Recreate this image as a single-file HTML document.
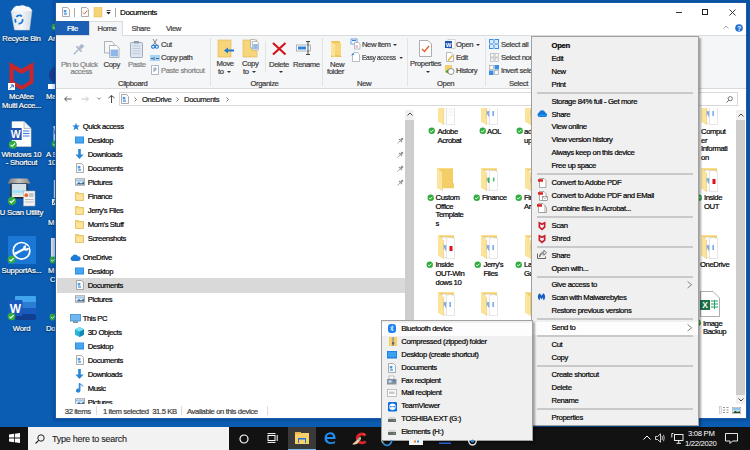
<!DOCTYPE html>
<html><head><meta charset="utf-8">
<style>
*{margin:0;padding:0;box-sizing:border-box}
html,body{width:750px;height:450px;overflow:hidden}
body{background:#0b5db3;font-family:"Liberation Sans",sans-serif;font-size:7.7px;letter-spacing:-0.4px;color:#000;position:relative}
.a{position:absolute}
svg.a{overflow:visible}
.t{position:absolute;white-space:nowrap;line-height:10px;-webkit-text-stroke:0.2px currentColor}
.g{color:#838383}
.d{color:#3c3c3c}
.w{color:#fff;letter-spacing:-0.2px;text-shadow:0 0 2px rgba(0,0,0,.6),0 1px 1px rgba(0,0,0,.5)}
.menu{position:absolute;background:#f0f0f0;border:1px solid #a0a0a0;box-shadow:2px 2px 2px rgba(0,0,0,.35)}
.mi{position:relative;height:12.9px;line-height:12.9px;white-space:nowrap}
.mi span{position:absolute;top:0;letter-spacing:-0.36px;-webkit-text-stroke:0.2px currentColor}
.ms{position:relative;height:4.07px}
.ms:after{content:"";position:absolute;left:5px;right:5px;top:0.3px;height:2px;background:#c9c9c9}
.hl{background:#fdfdfd}
.dd{display:inline-block;width:0;height:0;border-left:2px solid transparent;border-right:2px solid transparent;border-top:2.5px solid #333;vertical-align:1px;margin-left:1.5px}

</style></head><body>
<svg width="0" height="0" style="position:absolute"><defs><symbol id="fold" viewBox="0 0 18 24">
 <path d="M0 0 H16 V16 H17 V21 H0 Z" fill="#f3cd66"/>
 <path d="M0 0 H16 V1.2 H0 Z" fill="#f8dc88"/>
 <path d="M0 0 L5.5 5 V24 L0 20.5 Z" fill="#fbe49e"/>
 <path d="M5.5 5 V24" stroke="#eac25a" stroke-width="0.5"/>
</symbol>
<symbol id="foldp" viewBox="0 0 18 24">
 <path d="M0 0 H16 V21 H0 Z" fill="#f1cc68"/>
 <path d="M0 0 H16 V1.2 H0 Z" fill="#f8de8e"/>
 <path d="M4 2.5 Q7 1.5 11 3 V22.5 H4 Z" fill="#fbfbfb" stroke="#d4d4d4" stroke-width="0.5"/>
 <path d="M8.5 3 Q12 2 16.5 3.5 V23.5 H8.5 Z" fill="#fff" stroke="#cfcfcf" stroke-width="0.5"/>
 <path d="M5.5 9 Q7.8 11.5 5.5 15.5 Z" fill="#1d62d6"/><rect x="7" y="10" width="1.3" height="5.5" fill="#7fb0ee"/><rect x="11.5" y="10" width="1.3" height="5" fill="#5a98e6"/>
 <path d="M0 0 L5.5 5 V24 L0 20.5 Z" fill="#fbe39a"/>
 <path d="M5.5 5 V24" stroke="#eac25a" stroke-width="0.5"/>
</symbol><symbol id="foldg" viewBox="0 0 18 24">
 <path d="M0 0 H16 V21 H0 Z" fill="#f1cc68"/>
 <path d="M0 0 H16 V1.2 H0 Z" fill="#f8de8e"/>
 <path d="M4 2.5 Q7 1.5 11 3 V22.5 H4 Z" fill="#fbfbfb" stroke="#d4d4d4" stroke-width="0.5"/>
 <path d="M8.5 3 Q12 2 16.5 3.5 V23.5 H8.5 Z" fill="#fff" stroke="#cfcfcf" stroke-width="0.5"/>
 <path d="M5.5 9 Q7.8 11.5 5.5 15.5 Z" fill="#1f8a4a"/><rect x="7" y="10" width="1.5" height="5.5" fill="#2fae62"/><rect x="12" y="10" width="1.5" height="4" fill="#3cbf70"/>
 <path d="M0 0 L5.5 5 V24 L0 20.5 Z" fill="#fbe39a"/>
 <path d="M5.5 5 V24" stroke="#eac25a" stroke-width="0.5"/>
</symbol><symbol id="foldr" viewBox="0 0 18 24">
 <path d="M0 0 H16 V21 H0 Z" fill="#f1cc68"/>
 <path d="M0 0 H16 V1.2 H0 Z" fill="#f8de8e"/>
 <path d="M4 2.5 Q7 1.5 11 3 V22.5 H4 Z" fill="#fbfbfb" stroke="#d4d4d4" stroke-width="0.5"/>
 <path d="M8.5 3 Q12 2 16.5 3.5 V23.5 H8.5 Z" fill="#fff" stroke="#cfcfcf" stroke-width="0.5"/>
 <path d="M5.5 9 Q7.8 11.5 5.5 15.5 Z" fill="#1d62d6"/><rect x="7" y="10" width="1.3" height="5.5" fill="#7fb0ee"/><rect x="11.5" y="11" width="3" height="5" fill="#e0121c"/>
 <path d="M0 0 L5.5 5 V24 L0 20.5 Z" fill="#fbe39a"/>
 <path d="M5.5 5 V24" stroke="#eac25a" stroke-width="0.5"/>
</symbol><symbol id="foldw" viewBox="0 0 18 24">
 <path d="M0 0 H16 V21 H0 Z" fill="#f1cc68"/>
 <path d="M0 0 H16 V1.2 H0 Z" fill="#f8de8e"/>
 <path d="M4 2.5 Q7 1.5 11 3 V22.5 H4 Z" fill="#fbfbfb" stroke="#d4d4d4" stroke-width="0.5"/>
 <path d="M8.5 3 Q12 2 16.5 3.5 V23.5 H8.5 Z" fill="#fff" stroke="#cfcfcf" stroke-width="0.5"/>
 <path d="M9.5 5 H15.5 M9.5 8 H15.5 M9.5 11 H15.5 M9.5 14 H15.5" stroke="#e4e4e4" stroke-width="0.6"/>
 <path d="M0 0 L5.5 5 V24 L0 20.5 Z" fill="#fbe39a"/>
 <path d="M5.5 5 V24" stroke="#eac25a" stroke-width="0.5"/>
</symbol>
<symbol id="chk" viewBox="0 0 8 8">
 <circle cx="4" cy="4" r="3.4" fill="#2fac3e"/>
 <path d="M2.2 4.1 L3.5 5.3 L5.9 2.8" stroke="#fff" stroke-width="1" fill="none"/>
</symbol>
<symbol id="pin" viewBox="0 0 12 12">
 <path d="M0.8 11.2 L5.5 6.5" stroke="#858c94" stroke-width="1.3"/><path d="M11.3 3.3 L8.3 6.3 L5.7 3.7 L8.7 0.7 Z" fill="#858c94"/><path d="M8.6 8.6 L3.4 3.4" stroke="#858c94" stroke-width="1.8"/><path d="M6.5 6.5 L8 5 L7 4 L5.5 5.5 Z" fill="#858c94"/>
</symbol>
<symbol id="ndoc" viewBox="0 0 8 10">
 <path d="M0.5 0.5 H5.5 L7.5 2.5 V9.5 H0.5 Z" fill="#fafafa" stroke="#8a8a8a" stroke-width="0.7"/>
 <rect x="1.8" y="3" width="2.5" height="2.5" fill="#4a9be0"/>
 <rect x="2" y="6.2" width="3" height="1.6" fill="#62a8e8"/>
</symbol>
<symbol id="ndesk" viewBox="0 0 9 8">
 <rect x="0" y="0.5" width="9" height="7" fill="#2a8ce0"/>
 <rect x="0.8" y="1.2" width="7.4" height="5.2" fill="#46a6f0"/>
</symbol>
<symbol id="ndown" viewBox="0 0 9 10">
 <path d="M3.2 0 H5.8 V5.5 H8.6 L4.5 10 L0.4 5.5 H3.2 Z" fill="#2a87d8"/>
</symbol>
<symbol id="npic" viewBox="0 0 10 8">
 <rect x="0.3" y="0.8" width="9.4" height="6.4" fill="#f2f2f2" stroke="#7b7b7b" stroke-width="0.6"/>
 <path d="M1 6.5 L4 4 L6 5.5 L9 3.5 V6.5 Z" fill="#3c6e9c"/>
 <rect x="1" y="1.5" width="8" height="2" fill="#9cc8ec"/>
</symbol>
<symbol id="nfold" viewBox="0 0 9 9">
 <path d="M0.5 0.5 H3.5 L4.5 1.5 H8.5 V8.5 H0.5 Z" fill="#f4d06a" stroke="#dcae48" stroke-width="0.6"/>
 <rect x="1.2" y="2.4" width="6.6" height="5.5" fill="#fde49a"/>
</symbol>
<symbol id="ncloud" viewBox="0 0 11 7">
 <path d="M2.5 7 A2.5 2.5 0 0 1 2.2 2.2 A3.2 3.2 0 0 1 8 2.4 A2.3 2.3 0 0 1 8.7 7 Z" fill="#1c7ad4"/>
</symbol>
<symbol id="npc" viewBox="0 0 11 9">
 <rect x="0.5" y="0.5" width="10" height="6.5" fill="#6fb7f0" stroke="#3b8ed4" stroke-width="0.8"/>
 <rect x="3" y="7.5" width="5" height="1.2" fill="#5a6670"/>
</symbol>
<symbol id="n3d" viewBox="0 0 9 10">
 <path d="M4.5 0 L9 2.3 V7.7 L4.5 10 L0 7.7 V2.3 Z" fill="#2bb4d8"/>
 <path d="M4.5 4.6 L9 2.3 V7.7 L4.5 10 Z" fill="#138ab6"/>
 <path d="M0 2.3 L4.5 0 L9 2.3 L4.5 4.6 Z" fill="#7fe0f4"/>
</symbol>
<symbol id="nmusic" viewBox="0 0 8 10">
 <path d="M4 0.5 V7.5 A1.9 1.6 0 1 1 3.2 6.3 V0.5 H4 Q5.5 2.5 7.2 3.2" stroke="#2a87d8" stroke-width="0.9" fill="#2a87d8"/>
</symbol>
<symbol id="star" viewBox="0 0 10 10">
 <path d="M5 0.3 L6.3 3.6 L9.8 3.8 L7.1 6 L8 9.6 L5 7.6 L2 9.6 L2.9 6 L0.2 3.8 L3.7 3.6 Z" fill="#2a87d8"/>
</symbol>
</defs></svg>
<svg class="a" style="left:10px;top:4px;" width="23" height="27" viewBox="0 0 23 27"><defs><linearGradient id="rb" x1="0" x2="1"><stop offset="0" stop-color="#dfe6ec"/><stop offset="0.5" stop-color="#f4f6f8"/><stop offset="1" stop-color="#d2dae2"/></linearGradient></defs><path d="M1 7 L22 6 L19.5 26 L4.5 26 Z" fill="url(#rb)" stroke="#c9d2da" stroke-width="0.5"/><path d="M1.5 7.5 Q4 1 9 2 Q13 0.5 16 2.5 Q20.5 2 22 7 Z" fill="#f6f8fa"/><path d="M6.5 13 A3.5 3.5 0 0 1 12 12.5" stroke="#1a78d8" stroke-width="1.8" fill="none"/><path d="M12.5 15 A3.5 3.5 0 0 1 8.5 19.5" stroke="#1a78d8" stroke-width="1.8" fill="none"/><path d="M6 18.5 A3.5 3.5 0 0 1 5.5 15" stroke="#1a78d8" stroke-width="1.8" fill="none"/></svg>
<div class="t w" style="left:-18.5px;width:80px;text-align:center;top:34.00px;">Recycle Bin</div>
<svg class="a" style="left:9px;top:62px;" width="25" height="28" viewBox="0 0 25 28"><path d="M0.5 0 L12.5 7 L24.5 0 V21 L12.5 28 L0.5 21 Z" fill="#c9252c"/><path d="M4.5 7.5 L12.5 12 L20.5 7.5 V19 L12.5 23.8 L4.5 19 Z" fill="#0b5db3"/><rect x="-1" y="21" width="7" height="7" fill="#fff"/><path d="M0.8 26.5 L4 23.3 M2 23 H4.3 V25.3" stroke="#1f5fb8" stroke-width="1" fill="none"/></svg>
<div class="t w" style="left:-18.5px;width:80px;text-align:center;top:92.00px;">McAfee</div>
<div class="t w" style="left:-18.5px;width:80px;text-align:center;top:100.50px;">Multi Acce...</div>
<svg class="a" style="left:9px;top:121px;" width="23" height="27" viewBox="0 0 23 27"><path d="M3 0.5 H15 L22 7.5 V25.5 H3 Z" fill="#fff" stroke="#d8d0c8" stroke-width="0.6"/><path d="M15 0.5 V7.5 H22" fill="#f0f0f0" stroke="#9a9a9a" stroke-width="0.6"/><rect x="0.2" y="7" width="12.5" height="12" fill="#2456b8"/><text x="6.5" y="16.8" font-size="10.5" font-weight="bold" fill="#fff" text-anchor="middle" font-family="Liberation Sans" style="letter-spacing:-0.5px">W</text><path d="M14 10 H20.5 M14 12.5 H20.5 M14 15 H20.5" stroke="#3f7ad8" stroke-width="1.1"/></svg>
<svg class="a" style="left:7.5px;top:139.5px;" width="9.5" height="9.5"><use href="#chk"/></svg>
<div class="t w" style="left:-18.5px;width:80px;text-align:center;top:149.50px;">Windows 10</div>
<div class="t w" style="left:-18.5px;width:80px;text-align:center;top:158.00px;">- Shortcut</div>
<svg class="a" style="left:8px;top:178px;" width="28" height="29" viewBox="0 0 28 29"><defs><linearGradient id="lid" x1="0" x2="1"><stop offset="0" stop-color="#7a7672"/><stop offset="0.5" stop-color="#c8c4c0"/><stop offset="1" stop-color="#8a8682"/></linearGradient></defs><path d="M2.5 0.5 H19.5 L22.5 5.5 H-0.5 Z" fill="url(#lid)"/><rect x="2.5" y="5.5" width="17" height="15" fill="#222"/><rect x="3.8" y="6" width="14.5" height="13" fill="#d4e2ea"/><rect x="3.8" y="12.5" width="14.5" height="2.2" fill="#8fe4fa"/><rect x="3.8" y="17.5" width="14.5" height="1.5" fill="#f0f0f0"/><rect x="15.5" y="13" width="11.5" height="15" fill="#f2f2f2" stroke="#a8a8a8" stroke-width="0.5"/><circle cx="18.3" cy="17.2" r="1.9" fill="#e2702a"/><rect x="21" y="15" width="4.5" height="4" fill="#c4c4c4"/><path d="M17 21.5 H25.5 M17 24 H25.5" stroke="#bdbdbd" stroke-width="1.2"/></svg>
<svg class="a" style="left:7px;top:195.5px;" width="10" height="10"><use href="#chk"/></svg>
<div class="t w" style="left:-18.5px;width:80px;text-align:center;top:207.50px;">U Scan Utility</div>
<div class="a" style="left:7.5px;top:235.5px;width:28.5px;height:28px;background:#1a78d4"></div>
<svg class="a" style="left:11px;top:240px;" width="21" height="21" viewBox="0 0 21 21"><circle cx="10.5" cy="10.8" r="8.3" fill="none" stroke="#fff" stroke-width="1.7"/><path d="M4.5 13.5 L14 8.5" stroke="#fff" stroke-width="2"/><circle cx="15" cy="8" r="2.8" fill="#fff"/><path d="M15.5 5 L14.5 8.5 L18.5 7.5 Z" fill="#1a78d4"/><circle cx="4.8" cy="13.3" r="1.4" fill="#fff"/></svg>
<svg class="a" style="left:7px;top:254.5px;" width="9" height="9"><use href="#chk"/></svg>
<div class="t w" style="left:-18.5px;width:80px;text-align:center;top:265.50px;">SupportAs...</div>
<svg class="a" style="left:8px;top:296px;" width="28" height="24" viewBox="0 0 28 24"><rect x="7" y="0" width="21" height="24" rx="1" fill="#41a5ee"/><rect x="7" y="6" width="21" height="6" fill="#2b7cd3"/><rect x="7" y="12" width="21" height="6" fill="#185abd"/><rect x="7" y="18" width="21" height="6" rx="1" fill="#103f91"/><rect x="0" y="4" width="14.5" height="16" rx="1" fill="#185abd"/><text x="7.2" y="16.5" font-size="12" font-weight="bold" fill="#fff" text-anchor="middle" font-family="Liberation Sans">W</text></svg>
<svg class="a" style="left:7px;top:311.5px;" width="9" height="9"><use href="#chk"/></svg>
<div class="t w" style="left:-18.5px;width:80px;text-align:center;top:323.50px;">Word</div>
<svg class="a" style="left:51px;top:23px;" width="8" height="8"><use href="#chk"/></svg>
<div class="t w" style="left:48px;top:34.00px;">Ar</div>
<svg class="a" style="left:48px;top:63px;" width="10" height="25" viewBox="0 0 10 25"><circle cx="10" cy="12" r="9" fill="#1b3a8c"/><rect x="0" y="21" width="7" height="5" fill="#fff"/></svg>
<div class="t w" style="left:46px;top:92.00px;">Ma</div>
<svg class="a" style="left:52px;top:126px;" width="5" height="16" viewBox="0 0 5 16"><path d="M1.5 0 H5 V16 H1.5 Z" fill="#f2f2f2"/><path d="M1.5 2 L3 8 L4.5 2" stroke="#2b5fc0" stroke-width="0.8" fill="none"/></svg>
<svg class="a" style="left:51px;top:140px;" width="8" height="8"><use href="#chk"/></svg>
<div class="t w" style="left:46px;top:149.50px;">A S</div>
<div class="t w" style="left:48px;top:158.00px;">10</div>
<svg class="a" style="left:52px;top:180px;" width="5" height="26" viewBox="0 0 5 26"><path d="M1.8 0 H5 V18 H1.8 Z" fill="#e8e8e8"/><rect x="0" y="19" width="5" height="6" fill="#fff"/><path d="M1 24 L3.5 21 M2 21 H3.7 V22.7" stroke="#111" stroke-width="0.8" fill="none"/></svg>
<div class="t w" style="left:48px;top:217.50px;">M</div>
<svg class="a" style="left:50px;top:238px;" width="8" height="24" viewBox="0 0 8 24"><rect x="1" y="0" width="8" height="22" fill="#dfe3e6"/></svg>
<svg class="a" style="left:49px;top:256px;" width="8" height="8"><use href="#chk"/></svg>
<div class="t w" style="left:48px;top:265.50px;">M</div>
<div class="t w" style="left:50px;top:274.50px;">C</div>
<svg class="a" style="left:49px;top:313px;" width="8" height="8"><use href="#chk"/></svg>
<div class="t w" style="left:46px;top:323.50px;">Do</div>
<div class="a" style="left:53px;top:0px;width:696px;height:421px;background:rgba(0,30,80,.25);filter:blur(1.5px)"></div>
<div class="a" style="left:55px;top:2px;width:692px;height:417px;background:#fff;border:1px solid #1a5cae"></div>
<svg class="a" style="left:62px;top:7px;" width="8" height="10"><use href="#ndoc"/></svg>
<div class="a" style="left:74px;top:8px;width:1px;height:9px;background:#a8a8a8"></div>
<svg class="a" style="left:81px;top:7px;" width="8" height="10" viewBox="0 0 8 10"><path d="M0.5 0.5 H5.5 L7.5 2.5 V9.5 H0.5 Z" fill="#fafafa" stroke="#8a8a8a" stroke-width="0.7"/><path d="M2 5.5 L3.5 7 L6.3 3.5" stroke="#e06a2a" stroke-width="1" fill="none"/></svg>
<svg class="a" style="left:94px;top:7px;" width="8" height="10" viewBox="0 0 8 10"><rect x="0" y="0.5" width="8" height="9.5" fill="#f6d477" stroke="#e0b44c" stroke-width="0.5"/></svg>
<svg class="a" style="left:106px;top:10px;" width="5" height="5" viewBox="0 0 5 5"><rect x="0.5" y="0" width="4" height="0.8" fill="#222"/><path d="M0.3 2 H4.7 L2.5 4.5 Z" fill="#222"/></svg>
<div class="a" style="left:115px;top:8px;width:1px;height:9px;background:#a8a8a8"></div>
<div class="t " style="left:120px;top:7.50px;font-size:8px">Documents</div>
<div class="a" style="left:676px;top:12px;width:6px;height:1px;background:#333"></div>
<div class="a" style="left:702px;top:9px;width:6px;height:6px;border:1px solid #222"></div>
<svg class="a" style="left:728.5px;top:8.5px;" width="7" height="7" viewBox="0 0 7 7"><path d="M0.5 0.5 L6.5 6.5 M6.5 0.5 L0.5 6.5" stroke="#222" stroke-width="0.9"/></svg>
<div class="a" style="left:56px;top:21px;width:33px;height:14px;background:#1a5fb4"></div>
<div class="t " style="left:67px;top:24.00px;color:#fff">File</div>
<div class="a" style="left:89px;top:21px;width:34px;height:15px;background:#f5f6f7;border:1px solid #dadbdc;border-bottom:none;z-index:2"></div>
<div class="t d" style="left:97.5px;top:24.00px;z-index:3">Home</div>
<div class="t d" style="left:131.5px;top:24.00px;">Share</div>
<div class="t d" style="left:166px;top:24.00px;">View</div>
<svg class="a" style="left:723px;top:25px;" width="6" height="4" viewBox="0 0 6 4"><path d="M0.5 3.5 L3 1 L5.5 3.5" stroke="#9a9a9a" stroke-width="0.9" fill="none"/></svg>
<svg class="a" style="left:735px;top:24px;" width="8" height="8" viewBox="0 0 8 8"><circle cx="4" cy="4" r="3.8" fill="#1f6fd0"/><text x="4" y="6.6" font-size="7" font-weight="bold" fill="#fff" text-anchor="middle" font-family="Liberation Sans">?</text></svg>
<div class="a" style="left:56px;top:35px;width:690px;height:54px;background:#f5f6f7;border-top:1px solid #dadbdc;border-bottom:1px solid #dadbdc"></div>
<div class="a" style="left:210px;top:38px;width:1px;height:48px;background:#e2e3e4"></div>
<div class="a" style="left:322px;top:38px;width:1px;height:48px;background:#e2e3e4"></div>
<div class="a" style="left:406.5px;top:38px;width:1px;height:48px;background:#e2e3e4"></div>
<div class="a" style="left:484.5px;top:38px;width:1px;height:48px;background:#e2e3e4"></div>
<div class="a" style="left:264.5px;top:41px;width:1px;height:31px;background:#e2e3e4"></div>
<svg class="a" style="left:73px;top:42.5px;" width="12" height="12" viewBox="0 0 12 12"><path d="M0.8 11.2 L5.5 6.5" stroke="#a9b6c9" stroke-width="1.3"/><path d="M11.3 3.3 L8.3 6.3 L5.7 3.7 L8.7 0.7 Z" fill="#a9b6c9"/><path d="M8.6 8.6 L3.4 3.4" stroke="#a9b6c9" stroke-width="1.8"/><path d="M6.5 6.5 L8 5 L7 4 L5.5 5.5 Z" fill="#a9b6c9"/></svg>
<div class="t g" style="left:61px;top:59.50px;">Pin to Quick</div>
<div class="t g" style="left:70.5px;top:67.00px;">access</div>
<svg class="a" style="left:103.5px;top:40.5px;" width="16" height="17" viewBox="0 0 16 17"><path d="M0.5 0.5 H8 L10 2.5 V12 H0.5 Z" fill="#f4f6f8" stroke="#8c96a0" stroke-width="0.7"/><path d="M5.5 4.5 H12.5 L15 7 V16.5 H5.5 Z" fill="#fff" stroke="#8c96a0" stroke-width="0.7"/><rect x="6.5" y="8.5" width="7.5" height="7" fill="#8fb8ea"/></svg>
<div class="t d" style="left:103.5px;top:59.50px;">Copy</div>
<svg class="a" style="left:129.5px;top:40.5px;" width="13" height="17" viewBox="0 0 13 17"><rect x="0.5" y="1.5" width="12" height="15" rx="1" fill="#dfe6f0" stroke="#8c9cb2" stroke-width="0.8"/><rect x="4" y="0" width="5" height="2.5" fill="#8c9cb2"/><path d="M2.5 5 H10.5 M2.5 7.5 H10.5 M2.5 10 H10.5 M2.5 12.5 H10.5" stroke="#b4c4da" stroke-width="0.8"/></svg>
<div class="t g" style="left:128px;top:59.50px;">Paste</div>
<svg class="a" style="left:150.5px;top:39px;" width="8" height="10" viewBox="0 0 8 10"><path d="M2 0 L5.5 6 M6 0 L2.5 6" stroke="#6a6a6a" stroke-width="0.8"/><circle cx="2.2" cy="7.7" r="1.6" fill="none" stroke="#1f78d1" stroke-width="1.1"/><circle cx="5.8" cy="7.7" r="1.6" fill="none" stroke="#1f78d1" stroke-width="1.1"/></svg>
<div class="t d" style="left:161px;top:39.50px;">Cut</div>
<svg class="a" style="left:150px;top:54.5px;" width="10" height="6" viewBox="0 0 10 6"><rect x="0" y="0" width="10" height="6" fill="#a8d4f4"/><path d="M1 3.5 H3 M4 2 V5 M6 3.5 H9" stroke="#2a4a7a" stroke-width="0.8"/></svg>
<div class="t d" style="left:161px;top:52.50px;">Copy path</div>
<svg class="a" style="left:151px;top:65px;" width="8" height="10" viewBox="0 0 8 10"><path d="M0.5 0.5 H7.5 V9.5 H0.5 Z" fill="#fff" stroke="#8c9cb2" stroke-width="0.7"/><path d="M3 7 V3 H5 V5 H3" stroke="#7a8aa2" stroke-width="0.8" fill="none"/></svg>
<div class="t g" style="left:161px;top:65.50px;">Paste shortcut</div>
<div class="t d" style="left:118px;top:78.80px;">Clipboard</div>
<svg class="a" style="left:218px;top:40px;" width="17" height="17" viewBox="0 0 17 17"><rect x="0" y="0" width="13" height="17" fill="#f7d57a" stroke="#e2b54e" stroke-width="0.6"/><path d="M6 10.5 L10 7.5 V9.5 H16 V11.5 H10 V13.5 Z" fill="#1f78d1"/></svg>
<div class="t d" style="left:216.5px;top:59.30px;">Move</div>
<div class="t d" style="left:218px;top:67.00px;">to <i class="dd"></i></div>
<svg class="a" style="left:242.5px;top:39px;" width="16" height="18" viewBox="0 0 16 18"><rect x="0" y="1" width="14" height="17" fill="#f7d57a" stroke="#e2b54e" stroke-width="0.6"/><path d="M7.5 0.5 H12 L13.5 2 V9 H7.5 Z" fill="#f4f6f8" stroke="#8c96a0" stroke-width="0.6"/><path d="M9.5 2.5 H14 L15.5 4 V11 H9.5 Z" fill="#fff" stroke="#8c96a0" stroke-width="0.6"/><rect x="10.3" y="5" width="4.5" height="5" fill="#8fb8ea"/></svg>
<div class="t d" style="left:242px;top:59.30px;">Copy</div>
<div class="t d" style="left:243px;top:67.00px;">to <i class="dd"></i></div>
<svg class="a" style="left:271.5px;top:41.5px;" width="14.5" height="13.5" viewBox="0 0 14.5 13.5"><path d="M1 1 L13.5 12.5 M13.5 1 L1 12.5" stroke="#d4151c" stroke-width="2.2"/></svg>
<div class="t d" style="left:269px;top:59.50px;">Delete</div>
<div class="t d" style="left:277px;top:67.00px;"><i class="dd"></i></div>
<svg class="a" style="left:295.5px;top:41px;" width="18" height="14" viewBox="0 0 18 14"><rect x="0.5" y="4" width="14" height="6" fill="#fff" stroke="#8c96a0" stroke-width="0.7"/><rect x="2" y="5.5" width="8" height="3" fill="#2a86d8"/><path d="M10 0.5 H14 M12 0.5 V13.5 M10 13.5 H14" stroke="#333" stroke-width="0.9"/></svg>
<div class="t d" style="left:293px;top:59.50px;">Rename</div>
<div class="t d" style="left:250.5px;top:78.80px;">Organize</div>
<svg class="a" style="left:330.5px;top:41px;" width="11" height="16" viewBox="0 0 11 16"><path d="M0 0 H9 V14 L11 16 H0 Z" fill="#efc55a"/><path d="M0 1 L4 3 V16 L0 14 Z" fill="#fbe39a"/><rect x="4" y="2" width="6" height="12" fill="#f7d67a"/></svg>
<div class="t d" style="left:330px;top:59.50px;">New</div>
<div class="t d" style="left:327px;top:67.00px;">folder</div>
<svg class="a" style="left:351px;top:39px;" width="9" height="10" viewBox="0 0 9 10"><rect x="0" y="0" width="6" height="5" fill="#fff" stroke="#3b7fd0" stroke-width="0.7"/><path d="M1 1.5 H5" stroke="#3b7fd0" stroke-width="1.2"/><path d="M3.5 3.5 H7.5 L9 5 V10 H3.5 Z" fill="#fff" stroke="#8c96a0" stroke-width="0.6"/><rect x="4.5" y="6" width="2.5" height="3" fill="#f0c0c8"/></svg>
<div class="t d" style="left:362px;top:39.50px;letter-spacing:-0.45px">New item<i class="dd" style="margin-left:3px"></i></div>
<svg class="a" style="left:351px;top:52px;" width="9" height="10" viewBox="0 0 9 10"><path d="M3 0.5 H6.5 L8.5 2.5 V9.5 H1.5 V3 Z" fill="#fff" stroke="#8c96a0" stroke-width="0.6"/><path d="M0 3.5 L2 1 L3.5 2.5 Z" fill="#2a86d8"/></svg>
<div class="t d" style="left:362px;top:52.50px;transform:scaleX(0.87);transform-origin:0 0">Easy access<i class="dd" style="margin-left:4px"></i></div>
<div class="t d" style="left:357px;top:79.00px;">New</div>
<svg class="a" style="left:419px;top:40px;" width="13" height="17" viewBox="0 0 13 17"><path d="M0.5 0.5 H9 L12.5 4 V16.5 H0.5 Z" fill="#fff" stroke="#8c8c8c" stroke-width="0.7"/><path d="M3 9 L5.5 11.5 L10 6" stroke="#e85c20" stroke-width="1.3" fill="none"/></svg>
<div class="t d" style="left:410px;top:59.10px;">Properties</div>
<div class="t d" style="left:424px;top:66.50px;"><i class="dd"></i></div>
<svg class="a" style="left:445px;top:39px;" width="10" height="10" viewBox="0 0 10 10"><rect x="3" y="0.5" width="7" height="9" fill="#fff" stroke="#b0b0b0" stroke-width="0.5"/><rect x="0" y="2" width="7" height="7" fill="#1c55b8"/><text x="3.5" y="7.7" font-size="6" font-weight="bold" fill="#fff" text-anchor="middle" font-family="Liberation Sans">W</text></svg>
<div class="t d" style="left:456px;top:39.50px;">Open <i class="dd"></i></div>
<svg class="a" style="left:446px;top:52px;" width="8" height="10" viewBox="0 0 8 10"><path d="M0.5 0.5 H5 L7.5 3 V9.5 H0.5 Z" fill="#fff" stroke="#8c8c8c" stroke-width="0.6"/><path d="M2 8.5 L6.5 3.5" stroke="#e8a820" stroke-width="1.2"/></svg>
<div class="t d" style="left:456px;top:52.50px;">Edit</div>
<svg class="a" style="left:445px;top:65px;" width="10" height="10" viewBox="0 0 10 10"><rect x="0" y="0" width="7" height="8" fill="#f6d06a"/><circle cx="6" cy="6.5" r="3" fill="#fff" stroke="#666" stroke-width="0.7"/><path d="M0.5 6.5 L3 4.5 V8.5 Z" fill="#2ea44a"/></svg>
<div class="t d" style="left:456px;top:65.50px;">History</div>
<div class="t d" style="left:437px;top:78.90px;">Open</div>
<svg class="a" style="left:489px;top:39px;" width="10" height="10" viewBox="0 0 10 10"><rect x="0" y="0" width="10" height="10" fill="#3b8ee0"/><path d="M5 0 V10 M0 5 H10" stroke="#fff" stroke-width="0.8"/><rect x="1" y="1" width="3" height="3" fill="#d8ecff"/><rect x="6" y="1" width="3" height="3" fill="#d8ecff"/><rect x="1" y="6" width="3" height="3" fill="#d8ecff"/><rect x="6" y="6" width="3" height="3" fill="#d8ecff"/></svg>
<div class="t d" style="left:501px;top:39.50px;">Select all</div>
<svg class="a" style="left:490px;top:52.5px;" width="9" height="9" viewBox="0 0 9 9"><rect x="0.5" y="0.5" width="3.5" height="3.5" fill="none" stroke="#aaa" stroke-width="0.6"/><rect x="5" y="0.5" width="3.5" height="3.5" fill="none" stroke="#aaa" stroke-width="0.6"/><rect x="0.5" y="5" width="3.5" height="3.5" fill="none" stroke="#aaa" stroke-width="0.6"/><rect x="5" y="5" width="3.5" height="3.5" fill="none" stroke="#aaa" stroke-width="0.6"/></svg>
<div class="t d" style="left:501px;top:52.50px;">Select none</div>
<svg class="a" style="left:489px;top:65px;" width="10" height="10" viewBox="0 0 10 10"><rect x="0.5" y="0.5" width="4" height="4" fill="none" stroke="#999" stroke-width="0.6"/><rect x="5.5" y="0" width="4.5" height="4.5" fill="#3b8ee0"/><rect x="0" y="5.5" width="4.5" height="4.5" fill="#3b8ee0"/><rect x="5.5" y="5.5" width="4" height="4" fill="none" stroke="#999" stroke-width="0.6"/></svg>
<div class="t d" style="left:501px;top:65.50px;">Invert selection</div>
<div class="t d" style="left:509px;top:78.70px;">Select</div>
<svg class="a" style="left:64px;top:96px;" width="8" height="6" viewBox="0 0 8 6"><path d="M3 0.5 L0.7 3 L3 5.5 M0.7 3 H7.5" stroke="#5a5a5a" stroke-width="1" fill="none"/></svg>
<svg class="a" style="left:81px;top:96px;" width="8" height="6" viewBox="0 0 8 6"><path d="M5 0.5 L7.3 3 L5 5.5 M7.3 3 H0.5" stroke="#c8c8c8" stroke-width="1" fill="none"/></svg>
<svg class="a" style="left:97px;top:97px;" width="4" height="3" viewBox="0 0 4 3"><path d="M0.3 0.5 L2 2.3 L3.7 0.5" stroke="#666" stroke-width="0.8" fill="none"/></svg>
<svg class="a" style="left:107.5px;top:95px;" width="7" height="8" viewBox="0 0 7 8"><path d="M0.5 3 L3.5 0.5 L6.5 3 M3.5 0.5 V8" stroke="#4a4a4a" stroke-width="1" fill="none"/></svg>
<div class="a" style="left:118.5px;top:92px;width:480px;height:14px;border:1px solid #d9d9d9;background:#fff"></div>
<svg class="a" style="left:121px;top:94px;" width="8" height="10"><use href="#ndoc"/></svg>
<svg class="a" style="left:133.5px;top:97px;" width="3" height="5" viewBox="0 0 3 5"><path d="M0.5 0.5 L2.5 2.5 L0.5 4.5" stroke="#555" stroke-width="0.8" fill="none"/></svg>
<div class="t " style="left:142px;top:94.50px;color:#1a1a1a">OneDrive</div>
<svg class="a" style="left:175.5px;top:97px;" width="3" height="5" viewBox="0 0 3 5"><path d="M0.5 0.5 L2.5 2.5 L0.5 4.5" stroke="#555" stroke-width="0.8" fill="none"/></svg>
<div class="t " style="left:184px;top:94.50px;color:#1a1a1a">Documents</div>
<svg class="a" style="left:226px;top:97px;" width="3" height="5" viewBox="0 0 3 5"><path d="M0.5 0.5 L2.5 2.5 L0.5 4.5" stroke="#555" stroke-width="0.8" fill="none"/></svg>
<div class="a" style="left:602px;top:92px;width:135.5px;height:14px;border:1px solid #d9d9d9;background:#fff"></div>
<svg class="a" style="left:726px;top:96px;" width="7" height="7" viewBox="0 0 7 7"><circle cx="4.3" cy="2.7" r="2.1" fill="none" stroke="#555" stroke-width="0.8"/><path d="M2.8 4.2 L0.5 6.5" stroke="#555" stroke-width="0.9"/></svg>
<div class="a" style="left:56.5px;top:278px;width:348px;height:14.5px;background:#d9d9d9"></div>
<svg class="a" style="left:72px;top:121.5px;" width="8" height="9"><use href="#star"/></svg>
<div class="t " style="left:82.7px;top:121.50px;">Quick access</div>
<svg class="a" style="left:75.0px;top:136.0px;" width="9" height="8"><use href="#ndesk"/></svg>
<div class="t " style="left:87.7px;top:135.50px;">Desktop</div>
<svg class="a" style="left:396.5px;top:136.5px;" width="7" height="7"><use href="#pin"/></svg>
<svg class="a" style="left:75.0px;top:149.0px;" width="9" height="10"><use href="#ndown"/></svg>
<div class="t " style="left:87.7px;top:149.50px;">Downloads</div>
<svg class="a" style="left:396.5px;top:150.5px;" width="7" height="7"><use href="#pin"/></svg>
<svg class="a" style="left:75.5px;top:163.0px;" width="8" height="10"><use href="#ndoc"/></svg>
<div class="t " style="left:87.7px;top:163.50px;">Documents</div>
<svg class="a" style="left:396.5px;top:164.5px;" width="7" height="7"><use href="#pin"/></svg>
<svg class="a" style="left:74.5px;top:178.0px;" width="10" height="8"><use href="#npic"/></svg>
<div class="t " style="left:87.7px;top:177.50px;">Pictures</div>
<svg class="a" style="left:396.5px;top:178.5px;" width="7" height="7"><use href="#pin"/></svg>
<svg class="a" style="left:75.0px;top:191.5px;" width="9" height="9"><use href="#nfold"/></svg>
<div class="t " style="left:87.7px;top:191.50px;">Finance</div>
<svg class="a" style="left:75.0px;top:205.5px;" width="9" height="9"><use href="#nfold"/></svg>
<div class="t " style="left:87.7px;top:205.50px;">Jerry's Files</div>
<svg class="a" style="left:75.0px;top:219.5px;" width="9" height="9"><use href="#nfold"/></svg>
<div class="t " style="left:87.7px;top:219.50px;">Mom's Stuff</div>
<svg class="a" style="left:75.0px;top:233.5px;" width="9" height="9"><use href="#nfold"/></svg>
<div class="t " style="left:87.7px;top:233.50px;">Screenshots</div>
<svg class="a" style="left:70px;top:254px;" width="11" height="7"><use href="#ncloud"/></svg>
<div class="t " style="left:82.7px;top:252.80px;">OneDrive</div>
<svg class="a" style="left:75.0px;top:267.2px;" width="9" height="8"><use href="#ndesk"/></svg>
<div class="t " style="left:87.7px;top:266.70px;">Desktop</div>
<svg class="a" style="left:75.5px;top:280.3px;" width="8" height="10"><use href="#ndoc"/></svg>
<div class="t " style="left:87.7px;top:280.80px;">Documents</div>
<svg class="a" style="left:74.5px;top:295.2px;" width="10" height="8"><use href="#npic"/></svg>
<div class="t " style="left:87.7px;top:294.70px;">Pictures</div>
<svg class="a" style="left:70px;top:313.5px;" width="11" height="9"><use href="#npc"/></svg>
<div class="t " style="left:82.7px;top:313.50px;">This PC</div>
<svg class="a" style="left:75.0px;top:327.0px;" width="9" height="10"><use href="#n3d"/></svg>
<div class="t " style="left:87.7px;top:327.50px;">3D Objects</div>
<svg class="a" style="left:75.0px;top:342.0px;" width="9" height="8"><use href="#ndesk"/></svg>
<div class="t " style="left:87.7px;top:341.50px;">Desktop</div>
<svg class="a" style="left:75.5px;top:355.0px;" width="8" height="10"><use href="#ndoc"/></svg>
<div class="t " style="left:87.7px;top:355.50px;">Documents</div>
<svg class="a" style="left:75.0px;top:369.0px;" width="9" height="10"><use href="#ndown"/></svg>
<div class="t " style="left:87.7px;top:369.50px;">Downloads</div>
<svg class="a" style="left:75.5px;top:383.0px;" width="8" height="10"><use href="#nmusic"/></svg>
<div class="t " style="left:87.7px;top:383.50px;">Music</div>
<svg class="a" style="left:74.5px;top:398.0px;" width="10" height="8"><use href="#npic"/></svg>
<div class="t " style="left:87.7px;top:397.50px;">Pictures</div>
<div class="a" style="left:405px;top:110px;width:9px;height:295px;background:#f0f0f0"></div>
<div class="a" style="left:405px;top:120px;width:9px;height:280px;background:#cdcdcd"></div>
<svg class="a" style="left:406.5px;top:112px;" width="6" height="4" viewBox="0 0 6 4"><path d="M0.5 3.5 L3 1 L5.5 3.5" stroke="#333" stroke-width="0.9" fill="none"/></svg>
<div class="a" style="left:56px;top:404px;width:690px;height:14px;background:#fff"></div>
<div class="t d" style="left:64.8px;top:406.50px;">32 items</div>
<div class="a" style="left:95.5px;top:406px;width:1px;height:9px;background:#dcdcdc"></div>
<div class="t d" style="left:103px;top:406.50px;">1 item selected&nbsp; 31.5 KB</div>
<div class="a" style="left:180.5px;top:406px;width:1px;height:9px;background:#dcdcdc"></div>
<div class="t d" style="left:187px;top:406.50px;">Available on this device</div>
<div class="a" style="left:266.5px;top:406px;width:1px;height:9px;background:#dcdcdc"></div>
<svg class="a" style="left:719px;top:406px;" width="10" height="8" viewBox="0 0 10 8"><rect x="0.3" y="0.3" width="2" height="7.4" fill="#f4f4f4" stroke="#b0b0b0" stroke-width="0.5"/><path d="M4 1.5 H6 M7.5 1.5 H9.5 M4 4 H6 M7.5 4 H9.5 M4 6.5 H6 M7.5 6.5 H9.5" stroke="#7a7a7a" stroke-width="0.8"/></svg>
<svg class="a" style="left:732px;top:407px;" width="9" height="7" viewBox="0 0 9 7"><rect x="0.3" y="0.3" width="8.4" height="6.4" fill="#fff" stroke="#a89c8c" stroke-width="0.6"/><rect x="1" y="1" width="7" height="2.5" fill="#8ec4f0"/><path d="M1 5.8 L3 3.8 L5 4.8 L8 4.2 V6 H1 Z" fill="#1e4d2e"/></svg>
<div class="a" style="left:414px;top:108px;width:321px;height:300px;overflow:hidden"></div>
<div class="a" style="left:414px;top:108px;width:321px;height:296px;overflow:hidden">
<svg class="a" style="left:23.5px;top:-7px" width="18" height="24" viewBox="0 0 18 24" preserveAspectRatio="none"><use href="#foldw"/></svg>
<svg class="a" style="left:67px;top:-7px" width="18" height="24" viewBox="0 0 18 24" preserveAspectRatio="none"><use href="#foldp"/></svg>
<svg class="a" style="left:111px;top:-7px" width="18" height="24" viewBox="0 0 18 24" preserveAspectRatio="none"><use href="#foldp"/></svg>
<svg class="a" style="left:286.5px;top:-7px" width="18" height="24" viewBox="0 0 18 24" preserveAspectRatio="none"><use href="#foldp"/></svg>
<svg class="a" style="left:14.25px;top:19.44999999999999px" width="7.5" height="7.5" viewBox="0 0 8 8"><use href="#chk"/></svg>
<div class="t" style="left:23.600000000000023px;top:18.70px">Adobe</div>
<div class="t" style="left:23.600000000000023px;top:27.50px">Acrobat</div>
<svg class="a" style="left:64.64999999999998px;top:19.44999999999999px" width="7.5" height="7.5" viewBox="0 0 8 8"><use href="#chk"/></svg>
<div class="t" style="left:73px;top:18.70px">AOL</div>
<svg class="a" style="left:101.95000000000005px;top:19.44999999999999px" width="7.5" height="7.5" viewBox="0 0 8 8"><use href="#chk"/></svg>
<div class="t" style="left:110px;top:18.70px">adobe</div>
<div class="t" style="left:110px;top:27.50px">updates</div>
<div class="t" style="left:287px;top:18.70px">Comput</div>
<div class="t" style="left:287px;top:27.50px">er</div>
<div class="t" style="left:287px;top:36.30px">Informati</div>
<div class="t" style="left:287px;top:45.10px">on</div>
<svg class="a" style="left:22.5px;top:59.5px" width="18" height="23" viewBox="0 0 18 24" preserveAspectRatio="none"><use href="#fold"/></svg>
<svg class="a" style="left:67px;top:59.5px" width="18" height="23" viewBox="0 0 18 24" preserveAspectRatio="none"><use href="#foldg"/></svg>
<svg class="a" style="left:111px;top:59.5px" width="18" height="23" viewBox="0 0 18 24" preserveAspectRatio="none"><use href="#foldp"/></svg>
<svg class="a" style="left:286.5px;top:60px" width="18" height="24" viewBox="0 0 18 24" preserveAspectRatio="none"><use href="#foldr"/></svg>
<svg class="a" style="left:12.850000000000023px;top:85.55000000000001px" width="7.5" height="7.5" viewBox="0 0 8 8"><use href="#chk"/></svg>
<div class="t" style="left:21.5px;top:84.80px">Custom</div>
<div class="t" style="left:21.5px;top:93.60px">Office</div>
<div class="t" style="left:21.5px;top:102.40px">Template</div>
<div class="t" style="left:21.5px;top:111.20px">s</div>
<svg class="a" style="left:59.05000000000001px;top:85.55000000000001px" width="7.5" height="7.5" viewBox="0 0 8 8"><use href="#chk"/></svg>
<div class="t" style="left:68px;top:84.80px">Finance</div>
<svg class="a" style="left:101.25px;top:85.55000000000001px" width="7.5" height="7.5" viewBox="0 0 8 8"><use href="#chk"/></svg>
<div class="t" style="left:110px;top:84.80px">Financial</div>
<div class="t" style="left:110px;top:93.60px">Archive</div>
<svg class="a" style="left:281.25px;top:85.55000000000001px" width="7.5" height="7.5" viewBox="0 0 8 8"><use href="#chk"/></svg>
<div class="t" style="left:290px;top:84.80px">Inside</div>
<div class="t" style="left:290px;top:93.60px">OUT</div>
<svg class="a" style="left:23.5px;top:127px" width="18" height="24" viewBox="0 0 18 24" preserveAspectRatio="none"><use href="#foldr"/></svg>
<svg class="a" style="left:67px;top:127px" width="18" height="24" viewBox="0 0 18 24" preserveAspectRatio="none"><use href="#foldp"/></svg>
<svg class="a" style="left:111px;top:127px" width="18" height="24" viewBox="0 0 18 24" preserveAspectRatio="none"><use href="#foldp"/></svg>
<svg class="a" style="left:286.5px;top:127px" width="18" height="24" viewBox="0 0 18 24" preserveAspectRatio="none"><use href="#foldp"/></svg>
<svg class="a" style="left:12.25px;top:153.05px" width="7.5" height="7.5" viewBox="0 0 8 8"><use href="#chk"/></svg>
<div class="t" style="left:21.5px;top:152.30px">Inside</div>
<div class="t" style="left:21.5px;top:160.80px">OUT-Win</div>
<div class="t" style="left:21.5px;top:169.50px">dows 10</div>
<svg class="a" style="left:60.25px;top:153.05px" width="7.5" height="7.5" viewBox="0 0 8 8"><use href="#chk"/></svg>
<div class="t" style="left:69.5px;top:152.30px">Jerry's</div>
<div class="t" style="left:69.5px;top:160.80px">Files</div>
<svg class="a" style="left:101.25px;top:153.05px" width="7.5" height="7.5" viewBox="0 0 8 8"><use href="#chk"/></svg>
<div class="t" style="left:110px;top:152.30px">Large</div>
<div class="t" style="left:110px;top:160.80px">Games</div>
<div class="t" style="left:286px;top:152.30px">OneDrive</div>
<svg class="a" style="left:23.5px;top:184px" width="18" height="24" viewBox="0 0 18 24" preserveAspectRatio="none"><use href="#foldp"/></svg>
<svg class="a" style="left:67px;top:184px" width="18" height="24" viewBox="0 0 18 24" preserveAspectRatio="none"><use href="#foldp"/></svg>
<svg class="a" style="left:111px;top:184px" width="18" height="24" viewBox="0 0 18 24" preserveAspectRatio="none"><use href="#fold"/></svg>
<svg class="a" style="left:286px;top:183px" width="20" height="26" viewBox="0 0 20 26"><path d="M0.5 0.5 H13 L19.5 7 V25.5 H0.5 Z" fill="#fff" stroke="#9a9a9a" stroke-width="0.8"/><rect x="0" y="9" width="10" height="10" fill="#1e7145"/><text x="5" y="17" font-size="8.5" font-weight="bold" fill="#fff" text-anchor="middle" font-family="Liberation Sans">X</text><path d="M11 10 H18 M11 13 H18 M11 16 H18 M14.5 9 V18" stroke="#21a366" stroke-width="1"/></svg>
<svg class="a" style="left:280.25px;top:211.25px" width="7.5" height="7.5" viewBox="0 0 8 8"><use href="#chk"/></svg>
<div class="t" style="left:289px;top:210.50px">Image</div>
<div class="t" style="left:289px;top:219.00px">Backup</div>
</div>
<div class="a" style="left:736px;top:109.5px;width:9px;height:294.5px;background:#f0f0f0"></div>
<div class="a" style="left:736px;top:120px;width:9px;height:275px;background:#cdcdcd"></div>
<svg class="a" style="left:737.5px;top:113px;" width="6" height="4" viewBox="0 0 6 4"><path d="M0.5 3.5 L3 1 L5.5 3.5" stroke="#333" stroke-width="0.9" fill="none"/></svg>
<svg class="a" style="left:737.5px;top:398px;" width="6" height="4" viewBox="0 0 6 4"><path d="M0.5 0.5 L3 3 L5.5 0.5" stroke="#333" stroke-width="0.9" fill="none"/></svg>
<div class="a" style="left:0px;top:427px;width:750px;height:23px;background:#121212"></div>
<svg class="a" style="left:8.5px;top:433px;" width="11" height="10" viewBox="0 0 11 10"><path d="M0 1.5 L5 0.8 V4.6 H0 Z M5.8 0.7 L11 0 V4.6 H5.8 Z M0 5.4 H5 V9.2 L0 8.5 Z M5.8 5.4 H11 V10 L5.8 9.3 Z" fill="#fff"/></svg>
<div class="a" style="left:28px;top:427px;width:201px;height:23px;background:#f2f2f2"></div>
<svg class="a" style="left:35px;top:434px;" width="10" height="10" viewBox="0 0 10 10"><circle cx="6" cy="4" r="3.2" fill="none" stroke="#222" stroke-width="1"/><path d="M3.7 6.3 L0.5 9.5" stroke="#222" stroke-width="1.1"/></svg>
<div class="t " style="left:52px;top:434.40px;font-size:9px;letter-spacing:-0.25px;color:#1e1e1e;-webkit-text-stroke:0.1px #1e1e1e">Type here to search</div>
<svg class="a" style="left:239px;top:434px;" width="10" height="10" viewBox="0 0 10 10"><circle cx="5" cy="5" r="4" fill="none" stroke="#fff" stroke-width="1.2"/></svg>
<svg class="a" style="left:266.5px;top:433px;" width="11" height="10" viewBox="0 0 11 10"><rect x="1" y="2.5" width="7" height="5" fill="none" stroke="#fff" stroke-width="1"/><path d="M0.5 0.6 H8.5 M0.5 9.4 H8.5 M10.2 2 V8" stroke="#fff" stroke-width="1"/></svg>
<div class="a" style="left:288px;top:427px;width:28px;height:23px;background:#3a3a3a"></div>
<div class="a" style="left:288px;top:448.5px;width:28px;height:1.5px;background:#76b9ed"></div>
<svg class="a" style="left:294.5px;top:432px;" width="14" height="12" viewBox="0 0 14 12"><rect x="0" y="1" width="14" height="11" fill="#f8d16a"/><rect x="0" y="0" width="6" height="2" fill="#e8b94c"/><rect x="3" y="6" width="8" height="5" fill="#1f74d0"/><rect x="4" y="7.5" width="6" height="3.5" fill="#f8d16a"/></svg>
<svg class="a" style="left:324px;top:432px;" width="12" height="12" viewBox="0 0 12 12"><path d="M11.5 7 H3 Q3.5 10 7 10.2 Q9.5 10.2 11 9 V11.2 Q9 12 6.5 12 Q1 11.8 0.5 6.5 Q0.5 1 6 0.3 Q11.5 0.3 11.5 6 Z M3 5 H9 Q9 2.2 6 2.2 Q3.3 2.3 3 5 Z" fill="#1f8ef0"/></svg>
<svg class="a" style="left:352px;top:432px;" width="15" height="13" viewBox="0 0 15 13"><path d="M14.5 2.5 Q11 -0.8 7 1.2 Q3 3.5 4 8 Q5.5 12.5 10.5 12.3 Q13 12 14.5 10.5 L12.8 8.5 Q10.5 10 8.5 9 Q6.5 7.5 7.5 5 Q9 2.5 12.5 4.5 Z" fill="#d9262a"/><path d="M11 1.5 L13 2.5" stroke="#f06050" stroke-width="1"/><path d="M8.5 4.5 L4.5 8.5 L0.5 12 L1 12.8 L5 12 L9 7 Z" fill="#ead2a0"/><path d="M6 6.5 L8 8.5" stroke="#3a80d0" stroke-width="1"/></svg>
<svg class="a" style="left:643px;top:435px;" width="8" height="5" viewBox="0 0 8 5"><path d="M0.5 4.5 L4 1 L7.5 4.5" stroke="#fff" stroke-width="1" fill="none"/></svg>
<svg class="a" style="left:655px;top:433px;" width="10" height="10" viewBox="0 0 10 10"><path d="M0.5 3.5 H2.5 L5.5 0.8 V9.2 L2.5 6.5 H0.5 Z" fill="none" stroke="#fff" stroke-width="0.8"/><path d="M7 3 Q8 5 7 7 M8.5 1.8 Q10 5 8.5 8.2" stroke="#fff" stroke-width="0.7" fill="none"/></svg>
<svg class="a" style="left:671px;top:433px;" width="13" height="11" viewBox="0 0 13 11"><rect x="3.5" y="1.5" width="8.5" height="6" fill="none" stroke="#fff" stroke-width="0.9"/><path d="M7.7 7.5 V10 M5.5 10.3 H10 M0.8 0.5 V4.5 M0.8 0.5 H2.5" stroke="#fff" stroke-width="0.9"/></svg>
<div class="t " style="left:688px;top:428.50px;color:#fff;-webkit-text-stroke:0;letter-spacing:-0.3px">3:08 PM</div>
<div class="t " style="left:685px;top:438.50px;color:#fff;-webkit-text-stroke:0;letter-spacing:-0.3px">1/22/2020</div>
<svg class="a" style="left:725px;top:433px;" width="13" height="11" viewBox="0 0 13 11"><path d="M0.5 0.5 H12.5 V8 H7.5 L5 10.5 V8 H0.5 Z" fill="none" stroke="#fff" stroke-width="0.9"/></svg>
<div class="menu" style="left:531px;top:36px;width:168px;height:390px;padding-top:3.0px">
<div class="mi "><span style="left:19.5px;font-weight:bold;letter-spacing:-0.3px">Open</span></div>
<div class="mi "><span style="left:19.5px;">Edit</span></div>
<div class="mi "><span style="left:19.5px;">New</span></div>
<div class="mi "><span style="left:19.5px;">Print</span></div>
<div class="ms"></div>
<div class="mi "><span style="left:19.5px;">Storage 84% full - Get more</span></div>
<div class="mi "><span style="left:19.5px;">Share</span></div>
<div class="mi "><span style="left:19.5px;">View online</span></div>
<div class="mi "><span style="left:19.5px;">View version history</span></div>
<div class="mi "><span style="left:19.5px;">Always keep on this device</span></div>
<div class="mi "><span style="left:19.5px;">Free up space</span></div>
<div class="ms"></div>
<div class="mi "><span style="left:19.5px;">Convert to Adobe PDF</span></div>
<div class="mi "><span style="left:19.5px;">Convert to Adobe PDF and EMail</span></div>
<div class="mi "><span style="left:19.5px;">Combine files in Acrobat...</span></div>
<div class="ms"></div>
<div class="mi "><span style="left:19.5px;">Scan</span></div>
<div class="mi "><span style="left:19.5px;">Shred</span></div>
<div class="ms"></div>
<div class="mi "><span style="left:19.5px;">Share</span></div>
<div class="mi "><span style="left:19.5px;">Open with...</span></div>
<div class="ms"></div>
<div class="mi "><span style="left:19.5px;">Give access to</span></div>
<div class="mi "><span style="left:19.5px;">Scan with Malwarebytes</span></div>
<div class="mi "><span style="left:19.5px;">Restore previous versions</span></div>
<div class="ms"></div>
<div class="mi hl"><span style="left:19.5px;">Send to</span></div>
<div class="ms"></div>
<div class="mi "><span style="left:19.5px;">Cut</span></div>
<div class="mi "><span style="left:19.5px;">Copy</span></div>
<div class="ms"></div>
<div class="mi "><span style="left:19.5px;">Create shortcut</span></div>
<div class="mi "><span style="left:19.5px;">Delete</span></div>
<div class="mi "><span style="left:19.5px;">Rename</span></div>
<div class="ms"></div>
<div class="mi "><span style="left:19.5px;">Properties</span></div>
</div>
<div class="menu" style="left:381px;top:320px;width:151.5px;height:120.5px;padding-top:2.0px">
<div class="mi hl"><span style="left:19.2px;">Bluetooth device</span></div>
<div class="mi "><span style="left:19.2px;">Compressed (zipped) folder</span></div>
<div class="mi "><span style="left:19.2px;">Desktop (create shortcut)</span></div>
<div class="mi "><span style="left:19.2px;">Documents</span></div>
<div class="mi "><span style="left:19.2px;">Fax recipient</span></div>
<div class="mi "><span style="left:19.2px;">Mail recipient</span></div>
<div class="mi "><span style="left:19.2px;">TeamViewer</span></div>
<div class="mi "><span style="left:19.2px;">TOSHIBA EXT (G:)</span></div>
<div class="mi "><span style="left:19.2px;">Elements (H:)</span></div>
</div>
<svg class="a" style="left:537px;top:110px;" width="10.5" height="7" viewBox="0 0 10.5 7"><path d="M2.5 7 A2.4 2.4 0 0 1 2 2.4 A3.3 3.3 0 0 1 8.2 2.6 A2.3 2.3 0 0 1 8.5 7 Z" fill="#1478d8"/><path d="M1.5 6 Q5 4 9.5 6.2" stroke="#2d9cf0" stroke-width="1" fill="none"/></svg>
<svg class="a" style="left:537.5px;top:177.5px;" width="9" height="10" viewBox="0 0 9 10"><path d="M1.5 0.5 H6 L8 2.5 V9.5 H1.5 Z" fill="#fff" stroke="#777" stroke-width="0.6"/><rect x="0" y="1.2" width="5" height="2.5" fill="#e02020"/></svg>
<svg class="a" style="left:537.5px;top:190.5px;" width="10" height="10" viewBox="0 0 10 10"><path d="M1.5 0.5 H6 L8 2.5 V9.5 H1.5 Z" fill="#fff" stroke="#777" stroke-width="0.6"/><rect x="0" y="1.2" width="5" height="2.5" fill="#e02020"/><rect x="4.5" y="5.5" width="5" height="4" fill="#fff" stroke="#777" stroke-width="0.6"/><path d="M4.7 5.7 L7 7.8 L9.3 5.7" stroke="#777" stroke-width="0.5" fill="none"/></svg>
<svg class="a" style="left:537px;top:203px;" width="10" height="10" viewBox="0 0 10 10"><path d="M3.5 2.5 H7.5 L9.5 4.5 V9.5 H3.5 Z" fill="#fff" stroke="#777" stroke-width="0.6"/><path d="M1.5 0.5 H6 L8 2.5 V9.5 H1.5 Z" fill="#fff" stroke="#777" stroke-width="0.6"/><rect x="0" y="1.2" width="5" height="2.5" fill="#e02020"/></svg>
<svg class="a" style="left:538px;top:220.5px;" width="8" height="10" viewBox="0 0 8 10"><path d="M0.5 0.5 L4 2.3 L7.5 0.5 V6.5 L4 9.5 L0.5 6.5 Z" fill="#c8202a"/><path d="M2.2 3.3 L4 4.3 L5.8 3.3 V5.8 L4 7.3 L2.2 5.8 Z" fill="#f0f0f0"/></svg>
<svg class="a" style="left:538px;top:233.5px;" width="8" height="10" viewBox="0 0 8 10"><path d="M0.5 0.5 L4 2.3 L7.5 0.5 V6.5 L4 9.5 L0.5 6.5 Z" fill="#c8202a"/><path d="M2.2 3.3 L4 4.3 L5.8 3.3 V5.8 L4 7.3 L2.2 5.8 Z" fill="#f0f0f0"/></svg>
<svg class="a" style="left:537px;top:250px;" width="10" height="9" viewBox="0 0 10 9"><path d="M0.5 3.5 V8.5 H8.5 V6.5" stroke="#444" stroke-width="0.8" fill="none"/><path d="M2.5 7 Q3 3.5 7 3.5 V5.3 L9.5 2.8 L7 0.3 V2 Q2.8 2.2 2.5 7 Z" fill="none" stroke="#444" stroke-width="0.7"/></svg>
<svg class="a" style="left:537px;top:293px;" width="9" height="8" viewBox="0 0 9 8"><path d="M0.8 3.5 Q1.2 0.5 2.8 0.3 L4.5 2.8 L6.2 0.3 Q7.8 0.5 8.2 3.5 Q8.2 6 6.5 7.5 L5.8 4.5 L4.5 6.5 L3.2 4.5 L2.5 7.5 Q0.8 6 0.8 3.5 Z" fill="#1b5fc2"/></svg>
<svg class="a" style="left:687px;top:281px;" width="5.5" height="7.5" viewBox="0 0 5.5 7.5"><path d="M0.6 0.5 L4.6 3.75 L0.6 7" stroke="#666" stroke-width="0.8" fill="none"/></svg>
<svg class="a" style="left:687px;top:323.5px;" width="5.5" height="7.5" viewBox="0 0 5.5 7.5"><path d="M0.6 0.5 L4.6 3.75 L0.6 7" stroke="#666" stroke-width="0.8" fill="none"/></svg>
<svg class="a" style="left:388px;top:324px;" width="8" height="9" viewBox="0 0 8 9"><rect x="0" y="0" width="8" height="9" rx="3" fill="#1a82f0"/><path d="M2.2 3 L5.5 5.8 L4 7 V1.8 L5.5 3 L2.2 5.8" stroke="#fff" stroke-width="0.7" fill="none"/></svg>
<svg class="a" style="left:388.5px;top:337px;" width="8" height="9" viewBox="0 0 8 9"><rect x="0" y="0" width="8" height="9" fill="#f4cf6a"/><rect x="3.3" y="0" width="1.6" height="9" fill="#9a9a9a"/><rect x="3" y="5" width="2.2" height="2.5" fill="#666"/></svg>
<svg class="a" style="left:387px;top:351px;" width="10" height="7.5" viewBox="0 0 10 7.5"><rect x="0" y="0" width="10" height="7.5" fill="#1a78d6"/><rect x="0.7" y="0.7" width="8.6" height="5.6" fill="#3aa0f0"/></svg>
<svg class="a" style="left:388px;top:362.5px;" width="8" height="10"><use href="#ndoc"/></svg>
<svg class="a" style="left:387px;top:376px;" width="9.5" height="8.5" viewBox="0 0 9.5 8.5"><rect x="2" y="0" width="5" height="3" fill="#fff" stroke="#888" stroke-width="0.5"/><rect x="0" y="3" width="9.5" height="5.5" fill="#8a939c"/><rect x="1.5" y="4.5" width="3" height="2" fill="#cfe6f8"/><rect x="6" y="4" width="2.5" height="1.5" fill="#3a86d8"/></svg>
<svg class="a" style="left:387px;top:389px;" width="9.5" height="7.5" viewBox="0 0 9.5 7.5"><rect x="0.3" y="0.3" width="9" height="7" fill="#fafafa" stroke="#9a9a9a" stroke-width="0.6"/><rect x="2" y="2.5" width="5.5" height="2.5" fill="#c8c8c8"/></svg>
<svg class="a" style="left:387.5px;top:401.5px;" width="9" height="9.5" viewBox="0 0 9 9.5"><rect x="0" y="0" width="9" height="9.5" rx="1.2" fill="#0e6fe0"/><circle cx="4.5" cy="4.75" r="3.2" fill="#fff"/><path d="M1.8 4.75 L3 3.8 V5.7 Z M7.2 4.75 L6 3.8 V5.7 Z" fill="#0e6fe0"/><rect x="3" y="4.4" width="3" height="0.7" fill="#0e6fe0"/></svg>
<svg class="a" style="left:388px;top:417px;" width="8" height="5.5" viewBox="0 0 8 5.5"><rect x="0.5" y="0" width="7" height="2" fill="#d6d6d6"/><rect x="0" y="2" width="8" height="3" fill="#6a6a6a"/><rect x="5.5" y="3" width="1.5" height="1" fill="#49d049"/></svg>
<svg class="a" style="left:388px;top:430px;" width="8" height="5.5" viewBox="0 0 8 5.5"><rect x="0.5" y="0" width="7" height="2" fill="#d6d6d6"/><rect x="0" y="2" width="8" height="3" fill="#6a6a6a"/><rect x="5.5" y="3" width="1.5" height="1" fill="#49d049"/></svg>
<svg class="a" style="left:381px;top:440px;" width="12" height="6" viewBox="0 0 12 6"><path d="M1 0 Q2 5 6 5.5 Q10 5 11 0" stroke="#2d8fe0" stroke-width="1.6" fill="none"/><path d="M0.5 0 Q0.8 2 1.5 3" stroke="#f0a020" stroke-width="1" fill="none"/></svg>
<svg class="a" style="left:409px;top:440px;" width="14" height="6" viewBox="0 0 14 6"><rect x="0" y="0" width="14" height="5" fill="#f4f4f4"/><rect x="5" y="0.5" width="2" height="2" fill="#f08020"/><rect x="8" y="0.5" width="2" height="2" fill="#2d8fe0"/></svg>
<svg class="a" style="left:438px;top:440px;" width="14" height="5" viewBox="0 0 14 5"><rect x="1" y="2.5" width="12" height="1.5" fill="#2a5fd0"/></svg>
<svg class="a" style="left:468px;top:440px;" width="9" height="6" viewBox="0 0 9 6"><path d="M0.5 0 Q1 5 4.5 5 Q8 5 8.5 0" stroke="#e8e8e8" stroke-width="1.4" fill="none"/><circle cx="4.5" cy="1" r="1.6" fill="#2d8fe0"/></svg>
</body></html>
